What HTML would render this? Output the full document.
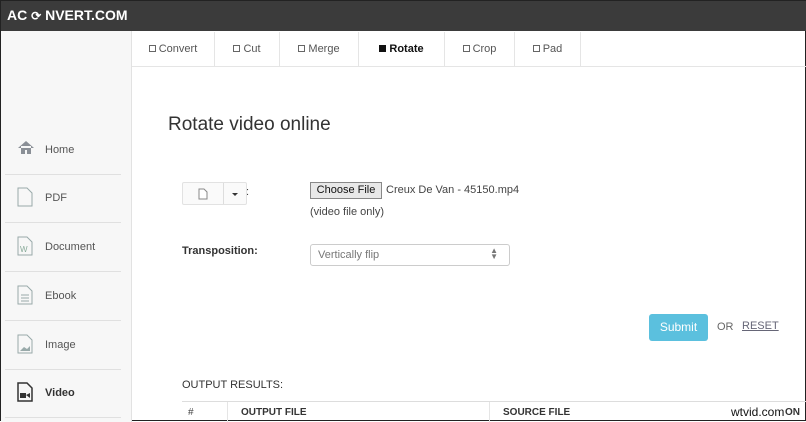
<!DOCTYPE html>
<html><head><style>
*{box-sizing:border-box;margin:0;padding:0}
body{width:806px;height:421px;overflow:hidden;font-family:"Liberation Sans",sans-serif;background:#fff;position:relative;border:1px solid #222}
.top{position:absolute;left:0;top:0;width:806px;height:30px;background:#3b3b3b;color:#fff;font-weight:bold;font-size:14px;padding:6px 0 0 6px}
.side{position:absolute;left:0;top:30px;width:131px;height:391px;background:#f7f7f7;border-right:1px solid #e2e2e2}
.it{position:absolute;left:4px;width:116px;height:48px;border-bottom:1px solid #e0e0e0;font-size:11px;color:#555}
.it span{position:absolute;left:40px;top:17px}
.it svg{position:absolute;left:12px;top:12px}
.tabs{position:absolute;left:131px;top:31px;width:675px;height:35px;border-bottom:1px solid #e5e5e5}
.tab{position:absolute;top:0;height:34px;border-right:1px solid #e5e5e5;font-size:11px;color:#555;text-align:center;line-height:34px}
.cb{display:inline-block;width:7px;height:7px;border:1px solid #666;margin-right:3px;vertical-align:0}
.t{position:absolute;font-size:11px;color:#444}
</style></head><body>
<div class="top">AC <span style="font-size:12px">⟳</span> NVERT.COM</div>
<div class="side">
<div class="it" style="top:96px"><svg width="18" height="16"><path d="M1 9L9 2L17 9M4 7v8h4v-4h2v4h4V7" fill="#8a8f96"/></svg><span>Home</span></div>
<div class="it" style="top:144px"><svg width="16" height="20"><path d="M1 1h9l5 5v13H1z" fill="none" stroke="#9aa" /></svg><span>PDF</span></div>
<div class="it" style="top:193px"><svg width="16" height="20"><path d="M1 1h9l5 5v13H1z" fill="none" stroke="#9aa"/><text x="3" y="16" font-size="8" fill="#8a9">W</text></svg><span>Document</span></div>
<div class="it" style="top:242px"><svg width="16" height="20"><path d="M1 1h9l5 5v13H1zM4 10h8M4 13h8M4 16h8" fill="none" stroke="#9aa"/></svg><span>Ebook</span></div>
<div class="it" style="top:291px"><svg width="16" height="20"><path d="M1 1h9l5 5v13H1z" fill="none" stroke="#9aa"/><path d="M3 17l4-4 3 2 3-3v5z" fill="#9aa"/></svg><span>Image</span></div>
<div class="it" style="top:339px"><svg width="16" height="20"><path d="M1 1h9l5 5v13H1z" fill="none" stroke="#333" stroke-width="1.5"/><rect x="3" y="11" width="6" height="5" fill="#333"/><path d="M9 13l4-2v5z" fill="#333"/></svg><span style="color:#333;font-weight:bold">Video</span></div>
</div>
<div class="tabs">
<div class="tab" style="left:0;width:83px"><i class="cb"></i>Convert</div>
<div class="tab" style="left:83px;width:65px"><i class="cb"></i>Cut</div>
<div class="tab" style="left:148px;width:79px"><i class="cb"></i>Merge</div>
<div class="tab" style="left:227px;width:86px;color:#111;font-weight:bold"><i class="cb" style="background:#111;border-color:#111"></i>Rotate</div>
<div class="tab" style="left:313px;width:70px"><i class="cb"></i>Crop</div>
<div class="tab" style="left:383px;width:66px"><i class="cb"></i>Pad</div>
</div>
<div class="t" style="left:167px;top:113px;font-size:19px;color:#333">Rotate video online</div>
<div style="position:absolute;left:181px;top:181px;width:65px;height:23px;border:1px solid #e2e2e2;background:#fafafa;border-radius:2px"><div style="position:absolute;left:40px;top:0;width:1px;height:21px;background:#ddd"></div><svg style="position:absolute;left:15px;top:5px" width="10" height="12"><path d="M1 1h5l3 3v7H1z" fill="#fff" stroke="#888"/></svg><div style="position:absolute;left:49px;top:10px;border-left:3px solid transparent;border-right:3px solid transparent;border-top:3px solid #333"></div></div>
<div class="t" style="left:245px;top:185px">:</div>
<div style="position:absolute;left:309px;top:181px;width:72px;height:17px;background:#e8e8e8;border:1px solid #888;font-size:11px;color:#111;text-align:center;line-height:15px">Choose File</div>
<div class="t" style="left:385px;top:183px;font-size:11px">Creux De Van - 45150.mp4</div>
<div class="t" style="left:309px;top:205px">(video file only)</div>
<div class="t" style="left:181px;top:244px;font-weight:bold;color:#333">Transposition:</div>
<div style="position:absolute;left:309px;top:243px;width:200px;height:22px;border:1px solid #ccc;border-radius:3px;font-size:11px;color:#777;padding:4px 7px">Vertically flip<span style="position:absolute;right:11px;top:3px;font-size:8px;line-height:6px">▲<br>▼</span></div>
<div style="position:absolute;left:648px;top:313px;width:59px;height:27px;background:#5bc0de;border-radius:3px;color:#fff;font-size:12px;text-align:center;line-height:27px">Submit</div>
<div class="t" style="left:716px;top:320px;color:#666">OR</div>
<div class="t" style="left:741px;top:319px;color:#667;text-decoration:underline">RESET</div>
<div class="t" style="left:181px;top:378px;color:#333">OUTPUT RESULTS:</div>
<div style="position:absolute;left:181px;top:400px;width:625px;height:1px;background:#ddd"></div>
<div style="position:absolute;left:226px;top:401px;width:1px;height:20px;background:#e5e5e5"></div>
<div style="position:absolute;left:488px;top:401px;width:1px;height:20px;background:#e5e5e5"></div>
<div class="t" style="left:187px;top:406px;font-size:10px">#</div>
<div class="t" style="left:240px;top:406px;font-weight:bold;font-size:10px;color:#333">OUTPUT FILE</div>
<div class="t" style="left:502px;top:406px;font-weight:bold;font-size:10px;color:#333">SOURCE FILE</div>
<div class="t" style="left:730px;top:404px;font-size:12px;color:#111;background:#fff">wtvid.com</div>
<div class="t" style="left:784px;top:406px;font-weight:bold;font-size:10px;color:#333">ON</div>
</body></html>
